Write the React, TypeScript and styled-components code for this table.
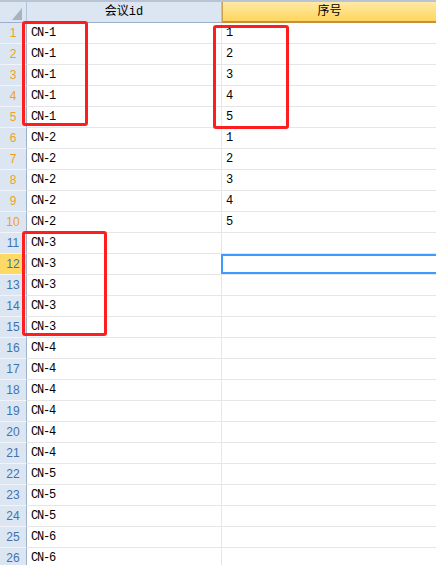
import styled, { createGlobalStyle, css } from "styled-components";

const GlobalStyle = createGlobalStyle`
  html, body {
    margin: 0;
    padding: 0;
    background: #ffffff;
  }
`;

interface RowData {
  id: string;
  seq: string;
}

const ids = [
  "CN-1", "CN-1", "CN-1", "CN-1", "CN-1",
  "CN-2", "CN-2", "CN-2", "CN-2", "CN-2",
  "CN-3", "CN-3", "CN-3", "CN-3", "CN-3",
  "CN-4", "CN-4", "CN-4", "CN-4", "CN-4", "CN-4",
  "CN-5", "CN-5", "CN-5",
  "CN-6", "CN-6",
];

const rows: RowData[] = ids.map((id, i) => ({
  id,
  seq: i < 10 ? String((i % 5) + 1) : "",
}));

const ACTIVE_ROW = 12;

// red annotation boxes drawn over the grid
const marks = [
  { left: 22, top: 21, width: 66, height: 105 },
  { left: 213, top: 25, width: 76, height: 104 },
  { left: 22, top: 231, width: 85, height: 105 },
];

export default function App(): JSX.Element {
  return (
    <>
      <GlobalStyle />
      <Sheet>
        <HeaderRow>
          <Corner>
            <CornerMark />
          </Corner>
          <ColHeader>会议id</ColHeader>
          <ColHeader $selected>序号</ColHeader>
        </HeaderRow>
        {rows.map((r, i) => {
          const n = i + 1;
          return (
            <Row key={n}>
              <RowNum $filtered={n <= 10} $active={n === ACTIVE_ROW}>
                {n}
              </RowNum>
              <Cell $first>{r.id}</Cell>
              <Cell>
                {r.seq}
                {n === ACTIVE_ROW && <Selection />}
              </Cell>
            </Row>
          );
        })}
        {marks.map((m, i) => (
          <Mark key={i} style={m} />
        ))}
      </Sheet>
    </>
  );
}

const Sheet = styled.div`
  position: relative;
  width: 436px;
  height: 565px;
  overflow: hidden;
  background: #ffffff;
  font-family: "Liberation Mono", "Noto Sans CJK SC", monospace;
  font-size: 12px;
  color: #000000;
`;

const HeaderRow = styled.div`
  display: flex;
  height: 20px;
  border-top: 2px solid #b8c4d4;
  border-bottom: 1px solid #9eb1c8;
`;

const Corner = styled.div`
  position: relative;
  width: 26px;
  flex: none;
  background: #dce6f2;
  border-right: 1px solid #b4c4d8;
`;

const CornerMark = styled.div`
  position: absolute;
  right: 4px;
  bottom: 2px;
  width: 0;
  height: 0;
  border-left: 10px solid transparent;
  border-bottom: 12px solid #a9b3bf;
`;

const ColHeader = styled.div<{ $selected?: boolean }>`
  display: flex;
  align-items: center;
  justify-content: center;
  width: 194px;
  flex: none;
  background: #dce6f2;
  border-right: 1px solid #b4c4d8;
  line-height: 20px;
  ${(p) =>
    p.$selected &&
    css`
      flex: 1;
      width: auto;
      background: linear-gradient(#ffe9a6, #ffd65e);
      border-left: 1px solid #c9a250;
      margin-bottom: -1px;
      border-bottom: 2px solid #c98e3a;
      height: 19px;
      border-right: none;
    `}
`;

const Row = styled.div`
  display: flex;
  height: 21px;
`;

const RowNum = styled.div<{ $filtered?: boolean; $active?: boolean }>`
  width: 27px;
  flex: none;
  box-sizing: border-box;
  display: flex;
  align-items: center;
  justify-content: center;
  background: ${(p) => (p.$active ? "#ffd966" : "#dce6f2")};
  border-right: 1px solid #9eb1c8;
  border-bottom: 1px solid #f1f5fa;
  font-family: "Liberation Sans", "DejaVu Sans", sans-serif;
  font-size: 12px;
  color: ${(p) => (p.$filtered ? "#f0a020" : "#3f73ad")};
`;

const Cell = styled.div<{ $first?: boolean }>`
  position: relative;
  box-sizing: border-box;
  display: flex;
  align-items: center;
  padding-left: 4px;
  border-bottom: 1px solid #e6e6e6;
  letter-spacing: -1.2px;
  ${(p) =>
    p.$first
      ? css`
          width: 195px;
          flex: none;
          border-right: 1px solid #e6e6e6;
        `
      : css`
          flex: 1;
        `}
`;

const Selection = styled.div`
  position: absolute;
  left: -1px;
  top: 0;
  right: -4px;
  bottom: 0;
  border: 2px solid #3a9cff;
  box-sizing: border-box;
`;

const Mark = styled.div`
  position: absolute;
  box-sizing: border-box;
  border: 3px solid #ff1e1e;
  border-radius: 3px;
  pointer-events: none;
`;
